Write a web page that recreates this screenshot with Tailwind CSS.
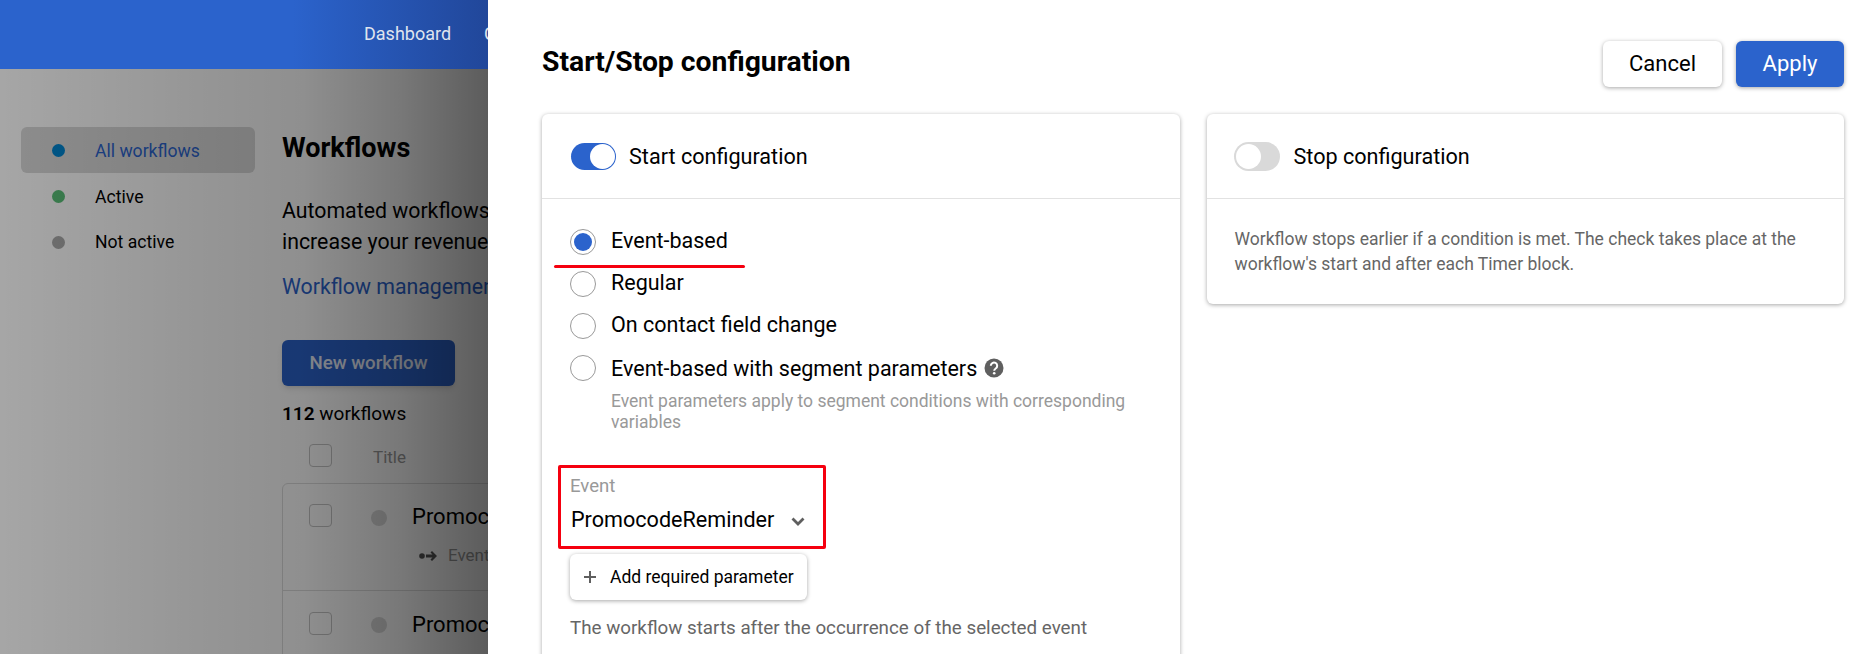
<!DOCTYPE html>
<html lang="en">
<head>
  <meta charset="UTF-8" />
  <title>Start/Stop configuration</title>
  <script src="https://cdn.jsdelivr.net/npm/@tailwindcss/browser@4"></script>
</head>
<body class="bg-white font-['Roboto',sans-serif]">
<div class="flex h-[654px] w-[1864px] overflow-hidden">

  <!-- Page behind the panel -->
  <div class="w-[488px] shrink-0 flex flex-col overflow-hidden">
    <header class="h-[69px] shrink-0 bg-gradient-to-r from-[#2b63cc] from-60% to-[#21479a] flex items-center pl-[364px] pb-[2px] gap-[33px] text-[18px] text-[#dfe4ee] whitespace-nowrap">
      <span>Dashboard</span>
      <span>Campaigns</span>
    </header>
    <div class="relative flex-1 bg-white flex">
      <!-- Sidebar -->
      <nav class="w-[282px] shrink-0 pt-[58px] pl-[21px] pr-[27px] text-[17.6px] text-black">
        <div class="h-[46px] flex items-center pl-[31px] rounded-md bg-[#d9d9d9] text-[#2b63cc]">
          <span class="w-[13px] h-[13px] rounded-full bg-[#0085d0]"></span>
          <span class="ml-[30px] mt-[2px]">All workflows</span>
        </div>
        <div class="h-[46px] flex items-center pl-[31px]">
          <span class="w-[13px] h-[13px] rounded-full bg-[#5ac078]"></span>
          <span class="ml-[30px] mt-[2px]">Active</span>
        </div>
        <div class="h-[46px] flex items-center pl-[31px]">
          <span class="w-[13px] h-[13px] rounded-full bg-[#aaaaaa]"></span>
          <span class="ml-[30px]">Not active</span>
        </div>
      </nav>
      <!-- Workflow list -->
      <main class="w-[700px] shrink-0 whitespace-nowrap text-black">
        <h2 class="mt-[61px] h-[36px] leading-[36px] text-[27px] font-bold">Workflows</h2>
        <p class="mt-[29px] text-[21.3px] leading-[31px]">Automated workflows help you engage your customers and<br>increase your revenue</p>
        <a class="block mt-[17px] text-[21.3px] leading-[26px] text-[#2b63cc]">Workflow management</a>
        <button class="mt-[40px] w-[173px] h-[46px] rounded-md bg-[#2b63cc] text-[#e6ecf8] text-[18.7px] font-medium shadow-md">New workflow</button>
        <p class="mt-[16px] text-[19px] leading-[24px]"><b class="font-semibold">112</b> workflows</p>
        <div class="mt-[18px] h-[23px] flex items-center pl-[27px]">
          <span class="w-[23px] h-[23px] rounded border border-[#c4c4c4]"></span>
          <span class="ml-[41px] mt-[5px] text-[17px] text-[#999999]">Title</span>
        </div>
        <div class="mt-[16px] border border-[#dddddd] rounded-md">
          <div class="h-[107px] border-b border-[#dddddd] pl-[26px] pt-[20px] flex items-start">
            <span class="w-[23px] h-[23px] rounded border border-[#c4c4c4]"></span>
            <span class="ml-[39px] mt-[6px] w-[16px] h-[16px] rounded-full bg-[#dadada]"></span>
            <div class="ml-[25px]">
              <p class="text-[22px] leading-[26px]">PromocodeReminder</p>
              <p class="mt-[13px] ml-[7px] flex items-center gap-[10px] text-[17px] text-[#999999]">
                <svg width="19" height="10" viewBox="0 0 19 10" fill="#555555"><circle cx="3" cy="5" r="2.8"/><path d="M7 3.600h6.500L11.500 1.500 13 0l5 5-5 5-1.500-1.500 2-2.100H7z"/></svg>
                Event
              </p>
            </div>
          </div>
          <div class="h-[80px] pl-[26px] pt-[21px] flex items-start">
            <span class="w-[23px] h-[23px] rounded border border-[#c4c4c4]"></span>
            <span class="ml-[39px] mt-[5px] w-[16px] h-[16px] rounded-full bg-[#dadada]"></span>
            <p class="ml-[25px] text-[22px] leading-[26px]">PromocodeReminder</p>
          </div>
        </div>
      </main>
      <!-- Dimming over the page -->
      <div class="absolute inset-0 bg-[linear-gradient(to_right,rgba(0,0,0,0.35),rgba(0,0,0,0.41)_40%,rgba(0,0,0,0.44)_62%,rgba(0,0,0,0.53)_82%,rgba(0,0,0,0.64))]"></div>
    </div>
  </div>

  <!-- Configuration panel -->
  <section class="flex-1 min-w-0 bg-white pl-[54px] pr-[20px]">
    <div class="h-[114px] pt-[41px] flex justify-between items-start">
      <h1 class="mt-[2px] text-[28.3px] leading-[38px] font-bold text-black">Start/Stop configuration</h1>
      <div class="flex gap-[14px] text-[22px]">
        <button class="w-[119px] h-[46px] pb-[2px] rounded-md bg-white text-black shadow-[0_1px_4px_rgba(0,0,0,0.35)]">Cancel</button>
        <button class="w-[108px] h-[46px] pb-[2px] rounded-md bg-[#2b63cc] text-white shadow-[0_1px_4px_rgba(0,0,0,0.35)]">Apply</button>
      </div>
    </div>

    <div class="grid grid-cols-2 gap-[27px] items-start">
      <!-- Start card -->
      <div class="relative rounded-md bg-white shadow-[0_1px_4px_rgba(0,0,0,0.35)] h-[600px]">
        <div class="h-[85px] border-b border-[#e2e2e2] flex items-center pl-[29px]">
          <span class="w-[45px] h-[27px] rounded-full bg-[#2b63cc] flex items-center justify-end pr-[1px]">
            <span class="w-[25px] h-[25px] rounded-full bg-white"></span>
          </span>
          <span class="ml-[13px] mt-[2px] text-[21.6px] text-black">Start configuration</span>
        </div>
        <div class="pt-[30px] pl-[28px] text-[21.5px] text-black">
          <div class="relative flex flex-col gap-[16px]">
            <label class="h-[26px] flex items-center">
              <span class="w-[26px] h-[26px] rounded-full border border-[#999999] flex items-center justify-center">
                <span class="w-[18px] h-[18px] rounded-full bg-[#2b63cc]"></span>
              </span>
              <span class="ml-[15px] -mt-[2px]">Event-based</span>
            </label>
            <!-- Red underline annotation -->
            <span class="absolute left-[-16px] top-[36px] w-[191px] h-[3px] rounded-full bg-[#f5000f]"></span>
            <label class="h-[26px] flex items-center">
              <span class="w-[26px] h-[26px] rounded-full border border-[#999999]"></span>
              <span class="ml-[15px] -mt-[2px]">Regular</span>
            </label>
            <label class="h-[26px] flex items-center">
              <span class="w-[26px] h-[26px] rounded-full border border-[#999999]"></span>
              <span class="ml-[15px] -mt-[2px]">On contact field change</span>
            </label>
            <label class="h-[26px] flex items-center">
              <span class="w-[26px] h-[26px] rounded-full border border-[#999999]"></span>
              <span class="ml-[15px] mt-[2px] whitespace-nowrap">Event-based with segment parameters</span>
              <svg class="ml-[7px]" width="20" height="20" viewBox="0 0 20 20"><circle cx="10" cy="10" r="9.500" fill="#5f5f5f"/><path d="M6.800 7.800a3.200 3.200 0 1 1 4.900 2.700c-1.100.7-1.500 1.100-1.500 2.200" fill="none" stroke="#ffffff" stroke-width="2"/><circle cx="10.200" cy="15.300" r="1.300" fill="#ffffff"/></svg>
            </label>
          </div>
          <p class="mt-[10px] ml-[41px] w-[530px] text-[17.5px] leading-[21px] text-[#999999]">Event parameters apply to segment conditions with corresponding variables</p>

          <!-- Event select, boxed in red -->
          <div class="mt-[32px] -ml-[12px] w-[268px] h-[84px] border-[3px] border-[#f5000f] rounded-[2px] pl-[9px] pt-[7px]">
            <p class="text-[18.6px] leading-[22px] text-[#999999]">Event</p>
            <div class="mt-[10px] flex items-center">
              <span class="ml-[1px] text-[21.6px] leading-[26px] whitespace-nowrap">PromocodeReminder</span>
              <svg class="ml-[17px] mt-[3px] shrink-0" width="14" height="9" viewBox="0 0 14 9" fill="none" stroke="#5f5f5f" stroke-width="2.800"><path d="M1.500 1.500 7 7l5.500-5.500"/></svg>
            </div>
          </div>
          <button class="mt-[5px] w-[237px] h-[46px] rounded-md bg-white shadow-[0_1px_4px_rgba(0,0,0,0.35)] flex items-center pl-[14px] text-[17.5px] whitespace-nowrap">
            <svg width="12" height="12" viewBox="0 0 12 12" stroke="#5f5f5f" stroke-width="2"><path d="M6 0v12M0 6h12"/></svg>
            <span class="ml-[14px]">Add required parameter</span>
          </button>
          <p class="mt-[16px] text-[18.8px] leading-[24px] text-[#666666]">The workflow starts after the occurrence of the selected event</p>
        </div>
      </div>

      <!-- Stop card -->
      <div class="rounded-md bg-white shadow-[0_1px_4px_rgba(0,0,0,0.35)] h-[190px]">
        <div class="h-[85px] border-b border-[#e2e2e2] flex items-center pl-[27px]">
          <span class="w-[46px] h-[29px] rounded-full bg-[#d9d9d9] flex items-center pl-[2px]">
            <span class="w-[25px] h-[25px] rounded-full bg-white"></span>
          </span>
          <span class="ml-[14px] mt-[2px] text-[21.6px] text-black">Stop configuration</span>
        </div>
        <p class="pt-[28px] pl-[28px] pr-[20px] text-[17.5px] leading-[25px] text-[#666666]">Workflow stops earlier if a condition is met. The check takes place at the workflow's start and after each Timer block.</p>
      </div>
    </div>
  </section>
</div>
</body>
</html>
